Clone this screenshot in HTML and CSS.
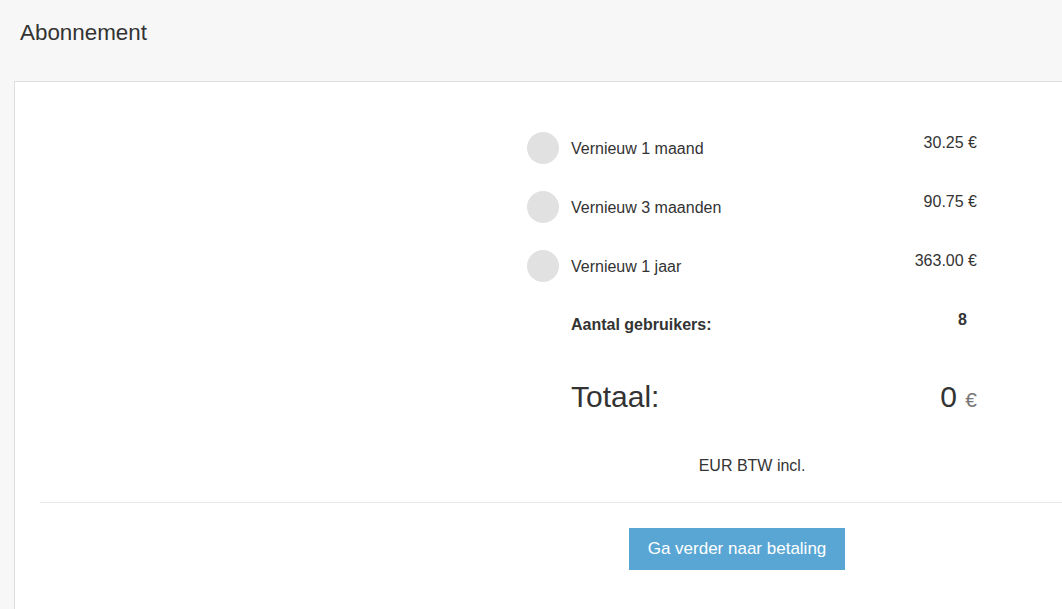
FILE: index.html
```html
<!DOCTYPE html>
<html lang="nl">
<head>
    <meta charset="UTF-8">
    <meta name="viewport" content="width=device-width, initial-scale=1.0">
    <title>Abonnement</title>
    <link rel="stylesheet" href="styles.css">
</head>
<body>

    <!-- Page header -->
    <div class="page-header">
        <h1>Abonnement</h1>
    </div>

    <!-- Subscription card -->
    <div class="card">
        <div class="summary">
            <div class="option">
                <span class="radio"></span>
                <span class="option-label">Vernieuw 1 maand</span>
                <span class="option-price">30.25 €</span>
            </div>
            <div class="option">
                <span class="radio"></span>
                <span class="option-label">Vernieuw 3 maanden</span>
                <span class="option-price">90.75 €</span>
            </div>
            <div class="option">
                <span class="radio"></span>
                <span class="option-label">Vernieuw 1 jaar</span>
                <span class="option-price">363.00 €</span>
            </div>

            <div class="users">
                <span class="users-label">Aantal gebruikers:</span>
                <span class="users-count">8</span>
            </div>

            <div class="total">
                <span class="total-label">Totaal:</span>
                <span class="total-amount">0 <span class="currency">€</span></span>
            </div>

            <p class="vat">EUR BTW incl.</p>
        </div>

        <hr class="divider">

        <div class="card-footer">
            <button class="pay-button">Ga verder naar betaling</button>
        </div>
    </div>

</body>
</html>
```

FILE: styles.css
```css
* {
    margin: 0;
    padding: 0;
    box-sizing: border-box;
}

html, body {
    overflow: hidden;
}

body {
    background-color: #f7f7f7;
    color: #333;
    font-family: "Liberation Sans", Arial, sans-serif;
    font-size: 16px;
    line-height: 1.43;
}

.page-header {
    height: 81px;
    padding: 20px 0 0 20px;
}

.page-header h1 {
    font-size: 22.4px;
    font-weight: normal;
    line-height: 26px;
}

.card {
    margin-left: 14px;
    width: 1100px;
    min-height: 528px;
    background-color: #fff;
    border-top: 1px solid #dedede;
    border-left: 1px solid #dedede;
    padding: 51px 25px 0 25px;
}

.summary {
    width: 450px;
    margin-left: 487px;
}

/* Renewal options */
.option {
    display: flex;
    align-items: center;
    height: 32px;
    margin-bottom: 27px;
}

.option:first-child {
    margin-top: -1px;
}

.radio {
    width: 32px;
    height: 32px;
    border-radius: 50%;
    background-color: #e1e1e1;
    flex-shrink: 0;
}

.option-label {
    margin-left: 12px;
    padding-top: 2px;
}

.option-price {
    margin-left: auto;
    align-self: flex-start;
}

/* Users */
.users {
    display: flex;
    align-items: center;
    height: 30px;
    padding-left: 44px;
    font-weight: bold;
}

.users-label {
    padding-top: 2px;
}

.users-count {
    margin-left: auto;
    align-self: flex-start;
    padding-right: 10px;
}

/* Total */
.total {
    display: flex;
    align-items: baseline;
    justify-content: space-between;
    margin-top: 41px;
    padding-left: 44px;
    font-size: 30px;
    line-height: 33px;
}

.currency {
    font-size: 21px;
    color: #777;
}

.vat {
    margin-top: 39px;
    text-align: center;
}

.divider {
    border: none;
    border-top: 1px solid #e8e8e8;
    margin-top: 24px;
}

.card-footer {
    padding: 25px 0 0 589px;
}

.pay-button {
    background-color: #59a6d4;
    color: #fff;
    border: none;
    font-family: "Liberation Sans", Arial, sans-serif;
    font-size: 17px;
    line-height: 22px;
    padding: 10px 17px;
    width: 216px;
    cursor: pointer;
}

.pay-button:hover {
    background-color: #4a94c2;
}
```
